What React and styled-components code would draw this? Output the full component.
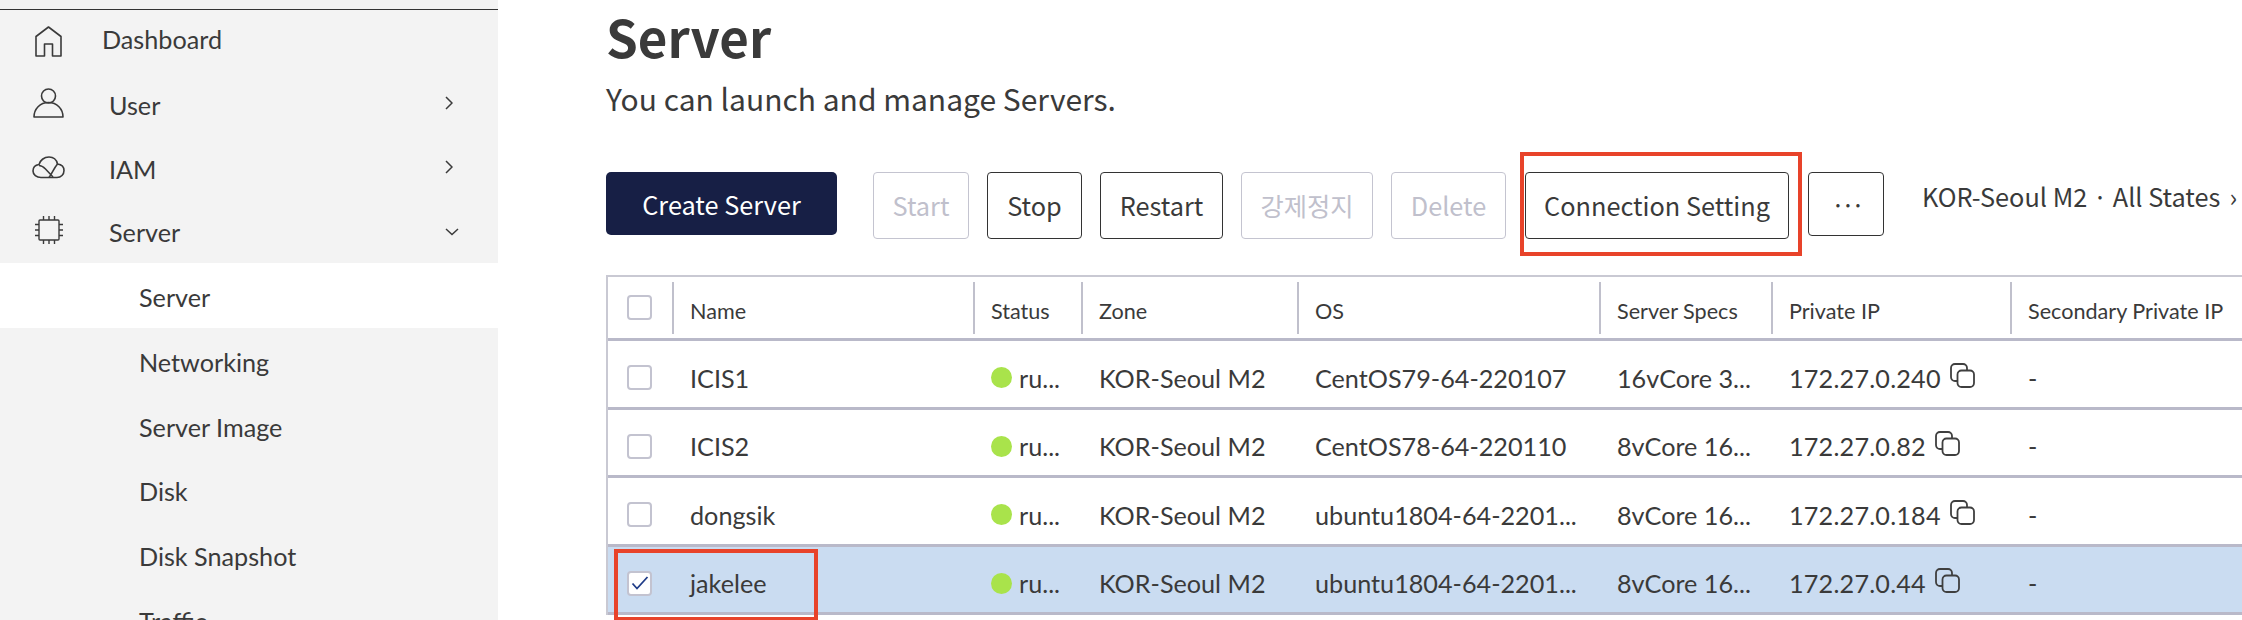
import React from 'react'
import styled, { createGlobalStyle } from 'styled-components'

const menu = [
  { label: 'Dashboard', icon: 'home', left: 102, lift: -4, short: true, height: 63 },
  { label: 'User', icon: 'user', left: 109, lift: 5, arrow: 'right', height: 64 },
  { label: 'IAM', icon: 'cloud', left: 109, lift: 2, arrow: 'right', height: 63 },
  { label: 'Server', icon: 'chip', left: 109, lift: 4, arrow: 'down', height: 63 },
]

const subMenu = ['Server', 'Networking', 'Server Image', 'Disk', 'Disk Snapshot', 'Traffic']

const actions = [
  { label: 'Start', off: true, width: 96 },
  { label: 'Stop', width: 95 },
  { label: 'Restart', width: 123 },
  { label: '강제정지', off: true, width: 132 },
  { label: 'Delete', off: true, width: 115 },
]

const columns = [
  { label: 'Name', width: 301 },
  { label: 'Status', width: 108 },
  { label: 'Zone', width: 216 },
  { label: 'OS', width: 302 },
  { label: 'Server Specs', width: 172 },
  { label: 'Private IP', width: 239 },
  { label: 'Secondary Private IP', width: 232 },
]

const servers = [
  { name: 'ICIS1', os: 'CentOS79-64-220107', specs: '16vCore 3...', ip: '172.27.0.240' },
  { name: 'ICIS2', os: 'CentOS78-64-220110', specs: '8vCore 16...', ip: '172.27.0.82' },
  { name: 'dongsik', os: 'ubuntu1804-64-2201...', specs: '8vCore 16...', ip: '172.27.0.184' },
  { name: 'jakelee', os: 'ubuntu1804-64-2201...', specs: '8vCore 16...', ip: '172.27.0.44', checked: true },
]

function MenuIcon({ name }) {
  if (name === 'home') {
    return (
      <svg width="27" height="31" viewBox="0 0 27 31" fill="none" stroke="#3a3a3a" strokeWidth="1.6">
        <path d="M1 30V10.500L13.500 1 26 10.500V30h-8.500V18h-8v12z" strokeLinejoin="round" />
      </svg>
    )
  }
  if (name === 'user') {
    return (
      <svg width="31" height="30" viewBox="0 0 31 30" fill="none" stroke="#3a3a3a" strokeWidth="1.6">
        <circle cx="15.500" cy="8" r="7" />
        <path d="M1 29c0-8 6-14.500 14.500-14.500S30 21 30 29z" strokeLinejoin="round" />
      </svg>
    )
  }
  if (name === 'cloud') {
    return (
      <svg width="33" height="23" viewBox="0 0 33 23" fill="none" stroke="#3a3a3a" strokeWidth="1.6">
        <path d="M9 21.500C4.500 21.500 1 18.500 1 15c0-3.500 2.500-6 6-6.500C8 4.500 12 1 17 1c4 0 7.500 2.500 8.500 7 4 .5 6.500 3 6.500 6.500 0 4-3 7-7 7z" strokeLinejoin="round" />
        <path d="M7 9.500c3 0 4.500 1.500 6.500 3.500l7.500 8M17 21.500c3-4 5-9.500 8.500-13.500" />
      </svg>
    )
  }
  return (
    <svg width="30" height="30" viewBox="0 0 30 30" fill="none" stroke="#3a3a3a" strokeWidth="1.400">
      <rect x="5" y="5" width="20" height="20" rx="1" />
      <path d="M9.500 1v4M15 1v4M20.500 1v4M9.500 25v4M15 25v4M20.500 25v4M1 9.500h4M1 15h4M1 20.500h4M25 9.500h4M25 15h4M25 20.500h4" />
    </svg>
  )
}

function Chevron({ dir }) {
  return dir === 'down' ? (
    <svg width="14" height="8" viewBox="0 0 14 8" fill="none" stroke="#3a3a3a" strokeWidth="1.500">
      <path d="M1 1l6 5.500L13 1" />
    </svg>
  ) : (
    <svg width="8" height="14" viewBox="0 0 8 14" fill="none" stroke="#3a3a3a" strokeWidth="1.500">
      <path d="M1 1l6 6-6 6" />
    </svg>
  )
}

function CopyIcon() {
  return (
    <svg width="25" height="25" viewBox="0 0 25 25" fill="none" stroke="#3f3f3f" strokeWidth="1.800">
      <path d="M7 18H5a4 4 0 0 1-4-4V5a4 4 0 0 1 4-4h8a4 4 0 0 1 4 4v2" />
      <rect x="7.500" y="7.500" width="16.500" height="16.500" rx="4" />
    </svg>
  )
}

export default function App() {
  return (
    <>
      <GlobalStyle />
      <Page>
        <Sidebar>
          <SideMenu>
            {menu.map(item => (
              <MenuRow key={item.label} $short={item.short} $height={item.height}>
                <IconSlot $lift={item.lift}><MenuIcon name={item.icon} /></IconSlot>
                <MenuLabel $left={item.left}>{item.label}</MenuLabel>
                {item.arrow && <ArrowSlot $dir={item.arrow}><Chevron dir={item.arrow} /></ArrowSlot>}
              </MenuRow>
            ))}
            {subMenu.map((label, i) => (
              <SubRow key={label} $active={i === 0}>{label}</SubRow>
            ))}
          </SideMenu>
        </Sidebar>

        <Main>
          <Title>Server</Title>
          <Subtitle>You can launch and manage Servers.</Subtitle>

          <Toolbar>
            <CreateButton>Create Server</CreateButton>
            <ActionGroup>
              {actions.map(a => (
                <ActionButton key={a.label} $off={a.off} $width={a.width}>{a.label}</ActionButton>
              ))}
              <Highlighted>
                <ActionButton $width={264}>Connection Setting</ActionButton>
              </Highlighted>
              <MoreButton>···</MoreButton>
            </ActionGroup>
            <FilterText>KOR-Seoul M2 · All States<FilterArrow>›</FilterArrow></FilterText>
          </Toolbar>

          <Table>
            <HeadRow>
              <CheckCell>
                <CheckBox />
              </CheckCell>
              {columns.map(c => (
                <HeadCell key={c.label} $width={c.width}>{c.label}</HeadCell>
              ))}
            </HeadRow>
            {servers.map(s => (
              <Row key={s.name} $selected={s.checked}>
                <CheckCell>
                  <CheckBox>
                    {s.checked && (
                      <svg width="18" height="14" viewBox="0 0 18 14" fill="none" stroke="#1f3c88" strokeWidth="1.800">
                        <path d="M1.500 7.500l4.500 5L16.500 1" />
                      </svg>
                    )}
                  </CheckBox>
                </CheckCell>
                <Cell $width={columns[0].width}>{s.name}</Cell>
                <Cell $width={columns[1].width}><StatusDot />ru...</Cell>
                <Cell $width={columns[2].width}>KOR-Seoul M2</Cell>
                <Cell $width={columns[3].width}>{s.os}</Cell>
                <Cell $width={columns[4].width}>{s.specs}</Cell>
                <Cell $width={columns[5].width}><IpText>{s.ip}</IpText><CopyWrap><CopyIcon /></CopyWrap></Cell>
                <Cell $width={columns[6].width}>-</Cell>
                {s.checked && <RowMark />}
              </Row>
            ))}
          </Table>
        </Main>
      </Page>
    </>
  )
}

const GlobalStyle = createGlobalStyle`
  html, body {
    margin: 0;
    padding: 0;
    background: #fff;
    overflow: hidden;
  }
`

const Page = styled.div`
  display: flex;
  width: 2242px;
  height: 620px;
  overflow: hidden;
  color: #3a3a3a;
  font-family: Lato, "Noto Sans", sans-serif;
`

const Sidebar = styled.aside`
  flex: 0 0 498px;
  height: 620px;
  overflow: hidden;
  box-sizing: border-box;
  padding-top: 9px;
  background: #f3f3f3;
`

const SideMenu = styled.nav`
  border-top: 1px solid #333;
`

const MenuRow = styled.div`
  box-sizing: border-box;
  display: flex;
  align-items: center;
  height: ${p => p.$height}px;
  padding-bottom: ${p => (p.$short ? 5 : 0)}px;
`

const IconSlot = styled.span`
  display: flex;
  justify-content: center;
  flex: 0 0 33px;
  margin-left: 32px;
  margin-bottom: ${p => p.$lift}px;
`

const MenuLabel = styled.span`
  margin-left: ${p => p.$left - 65}px;
  font-size: 25.2px;
`

const ArrowSlot = styled.span`
  display: flex;
  margin-left: auto;
  margin-right: ${p => (p.$dir === 'down' ? 39 : 45)}px;
  margin-bottom: ${p => (p.$dir === 'down' ? 0 : 4)}px;
`

const SubRow = styled.div`
  box-sizing: border-box;
  display: flex;
  align-items: center;
  height: 64.700px;
  padding: 4px 0 0 139px;
  font-size: 25.2px;
  background: ${p => (p.$active ? '#fff' : 'transparent')};
`

const Main = styled.main`
  flex: 1;
  min-width: 0;
  padding-left: 108px;
`

const Title = styled.h1`
  margin: 0;
  height: 76px;
  font-family: "Noto Sans CJK KR", sans-serif;
  font-size: 51px;
  line-height: 72px;
  font-weight: 700;
  color: #3a3a3a;
`

const Subtitle = styled.p`
  margin: 2px 0 0;
  height: 40px;
  font-family: "Noto Sans CJK KR", sans-serif;
  font-size: 30px;
  line-height: 40px;
`

const Toolbar = styled.div`
  display: flex;
  align-items: flex-start;
  margin-top: 54px;
  height: 103px;
  white-space: nowrap;
`

const CreateButton = styled.button`
  width: 231px;
  height: 63px;
  margin-right: 36px;
  padding: 0;
  border: 0;
  border-radius: 5px;
  background: #171f45;
  color: #fff;
  font-family: "Noto Sans CJK KR", sans-serif;
  font-size: 25.300px;
`

const ActionGroup = styled.div`
  display: flex;
  align-items: flex-start;
  gap: 18px;
`

const ActionButton = styled.button`
  width: ${p => p.$width}px;
  height: 67px;
  padding: 0 0 2px;
  background: #fff;
  border: 1px solid ${p => (p.$off ? '#c4c4d0' : '#333')};
  border-radius: 4px;
  color: ${p => (p.$off ? '#c0c0cc' : '#3a3a3a')};
  font-family: "Noto Sans CJK KR", sans-serif;
  font-size: 25.300px;
`

const Highlighted = styled.div`
  position: relative;
  margin-left: 1px;
  margin-right: 1px;

  &::after {
    content: '';
    position: absolute;
    left: -5px;
    right: -13px;
    top: -20px;
    bottom: -17px;
    border: 4px solid #e8432a;
    pointer-events: none;
  }
`

const MoreButton = styled.button`
  width: 76px;
  height: 64px;
  padding: 0;
  background: #fff;
  border: 1px solid #333;
  border-radius: 4px;
  color: #3a3a3a;
  font-family: "Noto Sans CJK KR", sans-serif;
  font-size: 25px;
  letter-spacing: -4px;
`

const FilterText = styled.div`
  margin-left: 38px;
  font-family: "Noto Sans CJK KR", sans-serif;
  font-size: 25.300px;
  line-height: 48px;
`

const FilterArrow = styled.span`
  margin-left: 9px;
`

const Table = styled.div`
  width: 1636px;
  border-top: 2px solid #c9c9d3;
  border-left: 2px solid #c9c9d3;
`

const HeadRow = styled.div`
  display: flex;
  align-items: stretch;
  height: 61px;
  border-bottom: 3px solid #b9b9c9;
`

const CheckCell = styled.div`
  box-sizing: border-box;
  flex: 0 0 64px;
  display: flex;
  align-items: center;
  padding-left: 19px;
`

const CheckBox = styled.span`
  box-sizing: border-box;
  display: flex;
  align-items: center;
  justify-content: center;
  width: 25px;
  height: 25px;
  background: #fff;
  border: 2px solid #c3c3d0;
  border-radius: 4px;
`

const HeadCell = styled.div`
  position: relative;
  box-sizing: border-box;
  display: flex;
  align-items: center;
  flex: 0 0 ${p => p.$width}px;
  padding: 6px 0 0 18px;
  font-size: 21.600px;
  white-space: nowrap;

  &::before {
    content: '';
    position: absolute;
    left: 0;
    top: 5px;
    bottom: 4px;
    width: 1.500px;
    background: #c0c0cc;
  }
`

const Row = styled.div`
  position: relative;
  box-sizing: border-box;
  display: flex;
  align-items: center;
  height: 68.500px;
  padding-top: 8px;
  background: ${p => (p.$selected ? '#cadcf1' : '#fff')};
  border-bottom: 3px solid #b9b9c9;
`

const Cell = styled.div`
  box-sizing: border-box;
  display: flex;
  align-items: center;
  flex: 0 0 ${p => p.$width}px;
  padding-left: 18px;
  font-size: 25.200px;
  white-space: nowrap;
`

const RowMark = styled.span`
  position: absolute;
  left: 6px;
  top: 2px;
  width: 204px;
  height: 72px;
  box-sizing: border-box;
  border: 4px solid #e8432a;
`

const StatusDot = styled.span`
  flex: none;
  width: 21px;
  height: 21px;
  margin-right: 7px;
  border-radius: 50%;
  background: #a9e34b;
`

const IpText = styled.span`
  letter-spacing: 0.200px;
`

const CopyWrap = styled.span`
  display: flex;
  margin-left: 9px;
  margin-top: -5px;
`
